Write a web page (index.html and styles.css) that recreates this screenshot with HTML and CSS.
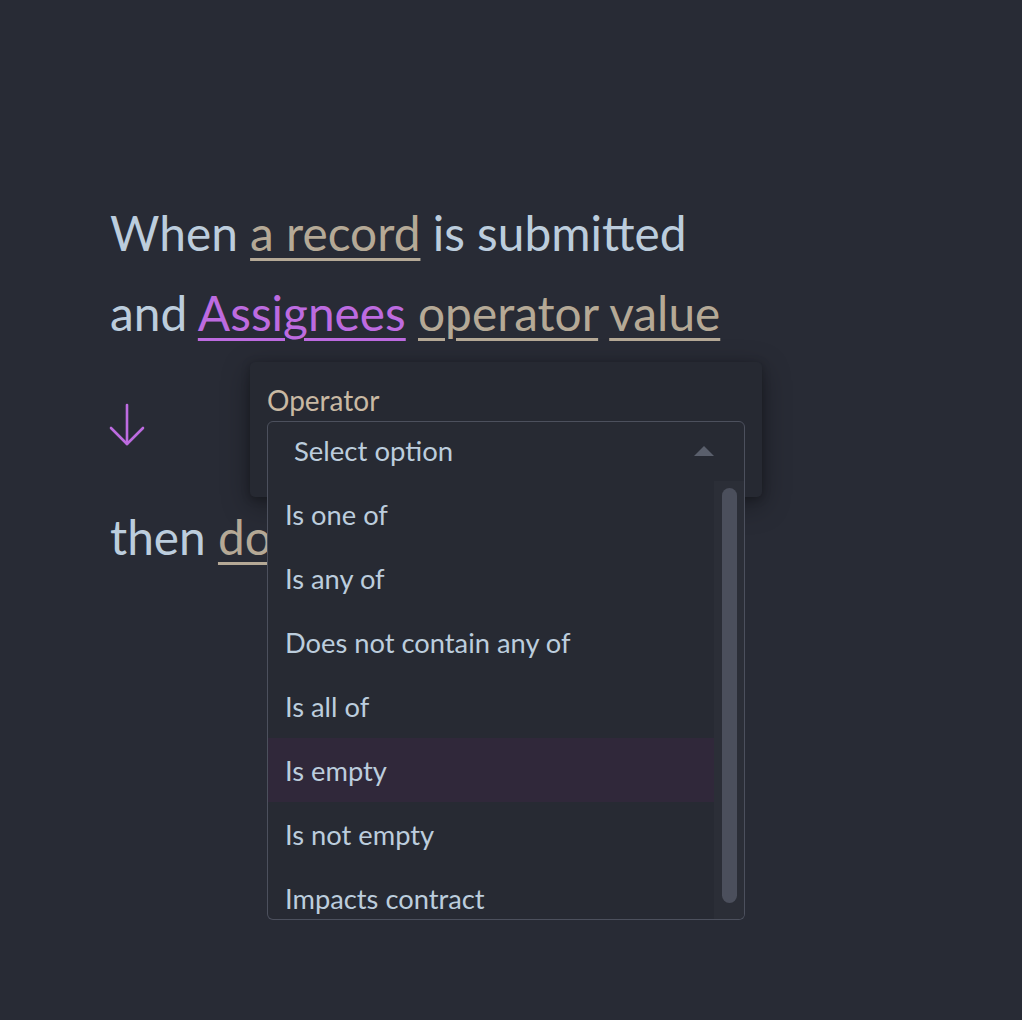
FILE: index.html
```html
<!DOCTYPE html>
<html>
<head>
<meta charset="utf-8">
<link rel="stylesheet" href="styles.css">
</head>
<body>
<main class="page">
  <div class="rule">
    <p class="line">When <span class="tok">a record</span> is submitted</p>
    <p class="line">and <span class="tok field">Assignees</span> <span class="tok">operator</span> <span class="tok">value</span></p>
    <div class="arrow">
      <svg width="38" height="44" viewBox="0 0 38 44" fill="none" stroke="#bd6be0" stroke-width="2.6" stroke-linecap="round" stroke-linejoin="round">
        <path d="M18 2 V41"/>
        <path d="M2 25 L18 41 L34 25"/>
      </svg>
    </div>
    <p class="line then">then <span class="tok">do</span></p>
  </div>

  <div class="popover">
    <label class="label">Operator</label>
    <div class="select">
      <div class="select-box">
        <span class="placeholder">Select option</span>
        <span class="caret"></span>
      </div>
      <div class="list">
        <ul class="options">
          <li class="option">Is one of</li>
          <li class="option">Is any of</li>
          <li class="option">Does not contain any of</li>
          <li class="option">Is all of</li>
          <li class="option active">Is empty</li>
          <li class="option">Is not empty</li>
          <li class="option">Impacts contract</li>
        </ul>
        <div class="scrollbar"><div class="thumb"></div></div>
      </div>
    </div>
  </div>
</main>
</body>
</html>
```

FILE: styles.css
```css
* { box-sizing: border-box; }
html, body {
  margin: 0;
  padding: 0;
  background: #282b35;
  height: 100%;
}
body {
  font-family: Lato, "Noto Sans", sans-serif;
  color: #bccddd;
}
.page {
  position: relative;
  width: 1022px;
  height: 1020px;
  overflow: hidden;
}
.rule {
  padding: 193px 0 0 110px;
}
.line {
  margin: 0;
  font-size: 47.8px;
  line-height: 80px;
  white-space: nowrap;
}
.tok {
  color: #b5a996;
  text-decoration: underline;
  text-decoration-thickness: 3px;
  text-underline-offset: 7px;
}
.tok.field {
  color: #bd6be0;
}
.arrow {
  height: 144px;
  padding-top: 50px;
  display: flex;
  align-items: flex-start;
}
.arrow svg { display: block; margin-left: -1px; }

.popover {
  position: absolute;
  left: 250px;
  top: 362px;
  width: 512px;
  height: 135px;
  background: #262932;
  border-radius: 5px;
  box-shadow: 0 8px 28px rgba(0,0,0,0.35), 0 2px 8px rgba(0,0,0,0.25);
  padding: 21px 17px 0 17px;
}
.label {
  display: block;
  font-size: 28px;
  line-height: 34px;
  color: #c9b9a3;
  margin-bottom: 4px;
}
.select {
  position: relative;
  width: 478px;
}
.select-box {
  height: 61px;
  border: 1px solid #4c505d;
  border-radius: 6px 6px 0 0;
  background: #272a33;
  display: flex;
  align-items: center;
  justify-content: space-between;
  padding: 0 30px 0 26px;
}
.placeholder {
  font-size: 27.5px;
  color: #bccddd;
  margin-top: -2px;
}
.caret {
  width: 0;
  height: 0;
  border-left: 10px solid transparent;
  border-right: 10px solid transparent;
  border-bottom: 10px solid #5a5f6c;
  margin-top: -2px;
}
.list {
  position: absolute;
  left: 0;
  top: 60px;
  width: 478px;
  height: 439px;
  border: 1px solid #4c505d;
  border-top: 0;
  border-radius: 0 0 6px 6px;
  background: #272a33;
  overflow: hidden;
  display: flex;
}
.options {
  list-style: none;
  margin: 0;
  padding: 1px 0 0 0;
  flex: 1;
}
.option {
  height: 64px;
  display: flex;
  align-items: center;
  padding-left: 17px;
  font-size: 27.3px;
  color: #bccddd;
}
.option.active {
  background: #30283a;
}
.scrollbar {
  width: 30px;
  background: #2b2e37;
  padding: 7px 7px 0 8px;
}
.thumb {
  height: 415px;
  border-radius: 8px;
  background: #4b4f5c;
}
```
